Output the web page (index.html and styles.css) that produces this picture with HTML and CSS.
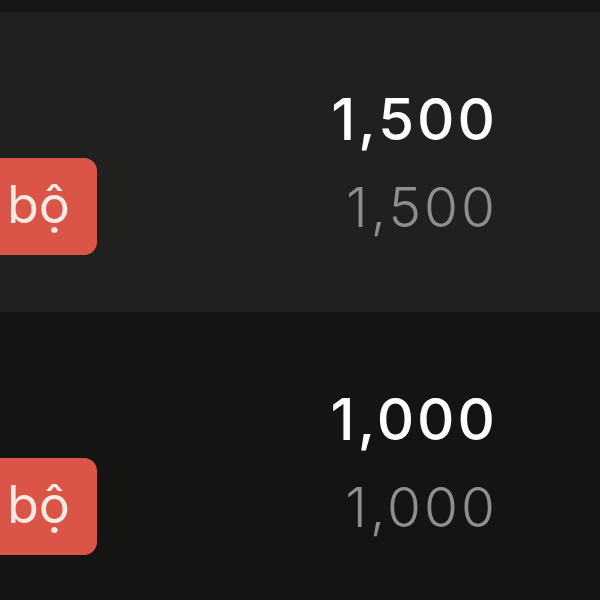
FILE: index.html
```html
<!DOCTYPE html>
<html>
<head>
<meta charset="utf-8">
<link rel="stylesheet" href="styles.css">
</head>
<body>
<div class="topbar"></div>
<div class="row row-alt">
  <div class="badge">bộ</div>
  <div class="amounts">
    <div class="amount">1,500</div>
    <div class="sub">1,500</div>
  </div>
</div>
<div class="row">
  <div class="badge">bộ</div>
  <div class="amounts">
    <div class="amount">1,000</div>
    <div class="sub">1,000</div>
  </div>
</div>
</body>
</html>
```

FILE: styles.css
```css
html, body {
  margin: 0;
  padding: 0;
  background: #141413;
  font-family: Inter, "Liberation Sans", sans-serif;
  overflow: hidden;
  width: 600px;
  height: 600px;
}
.topbar {
  height: 12px;
  background: #161615;
}
.row {
  height: 300px;
  box-sizing: border-box;
  padding-top: 63px;
  padding-right: 102px;
  display: flex;
  justify-content: space-between;
  align-items: flex-start;
}
.row-alt {
  background: #20211f;
}
.badge {
  margin-top: 83px;
  margin-left: -40px;
  width: 137px;
  height: 97px;
  box-sizing: border-box;
  padding-left: 47px;
  border-radius: 13px;
  background: #da5547;
  color: #f7e9e4;
  font-size: 52px;
  line-height: 94px;
}
.amounts {
  display: flex;
  flex-direction: column;
  align-items: flex-end;
}
.amount {
  height: 88px;
  line-height: 88px;
  font-size: 58px;
  font-weight: 500;
  letter-spacing: 3px;
  color: #ffffff;
}
.sub {
  height: 88px;
  line-height: 88px;
  font-size: 55px;
  font-weight: 300;
  letter-spacing: 3px;
  color: #8e8e8c;
}
```
